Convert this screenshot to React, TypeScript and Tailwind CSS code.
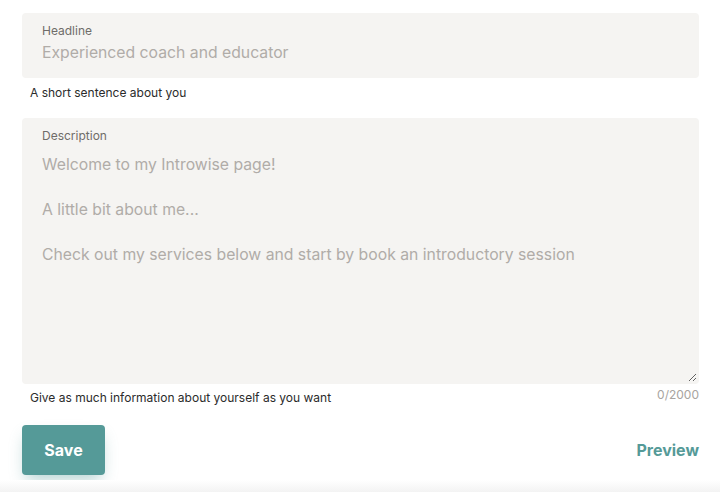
export default function App() {
  return (
    <div className="min-h-[492px] w-[720px] bg-white font-['Inter',sans-serif] flex flex-col">
      <div className="flex flex-col px-[22px] pt-[13px] pr-[21px]">
        <label className="flex flex-col rounded bg-[#f5f4f2] px-5 pt-[10px] pb-[14px]">
          <span className="text-[12px] leading-[16px] text-[#6f6c69]">Headline</span>
          <input
            className="mt-[3px] bg-transparent text-[15.75px] leading-[22px] text-[#2a2a2a] outline-none placeholder:text-[#b0aca8]"
            placeholder="Experienced coach and educator"
          />
        </label>
        <p className="mt-[7px] px-2 text-[12px] leading-[16px] text-[#2b2b2b]">
          A short sentence about you
        </p>

        <label className="mt-[17px] flex h-[266px] flex-col rounded bg-[#f5f4f2] pl-5 pt-[10px] pb-[2px] pr-[2px]">
          <span className="text-[12px] leading-[16px] text-[#6f6c69]">Description</span>
          <textarea
            className="mt-[10px] flex-1 bg-transparent text-[15.75px] leading-[22.5px] text-[#2a2a2a] outline-none placeholder:text-[#b0aca8] resize-y"
            placeholder={"Welcome to my Introwise page!\n\nA little bit about me...\n\nCheck out my services below and start by book an introductory session"}
          />
        </label>
        <div className="mt-[3px] flex items-start justify-between px-2">
          <p className="pt-[3px] text-[12px] leading-[16px] text-[#2b2b2b]">
            Give as much information about yourself as you want
          </p>
          <span className="-mr-2 text-[12px] leading-[16px] text-[#a8a4a0]">0/2000</span>
        </div>

        <div className="mt-[19px] flex items-center justify-between">
          <button className="h-[50px] w-[83px] rounded bg-[#559a98] text-[16px] font-bold text-white shadow-[0_8px_16px_-4px_rgba(85,154,152,0.45)]">
            Save
          </button>
          <button className="text-[16px] font-bold text-[#559a98]">Preview</button>
        </div>
      </div>
      <div className="mt-auto h-[12px] bg-gradient-to-b from-white to-[#f3f3f3]" />
    </div>
  );
}
